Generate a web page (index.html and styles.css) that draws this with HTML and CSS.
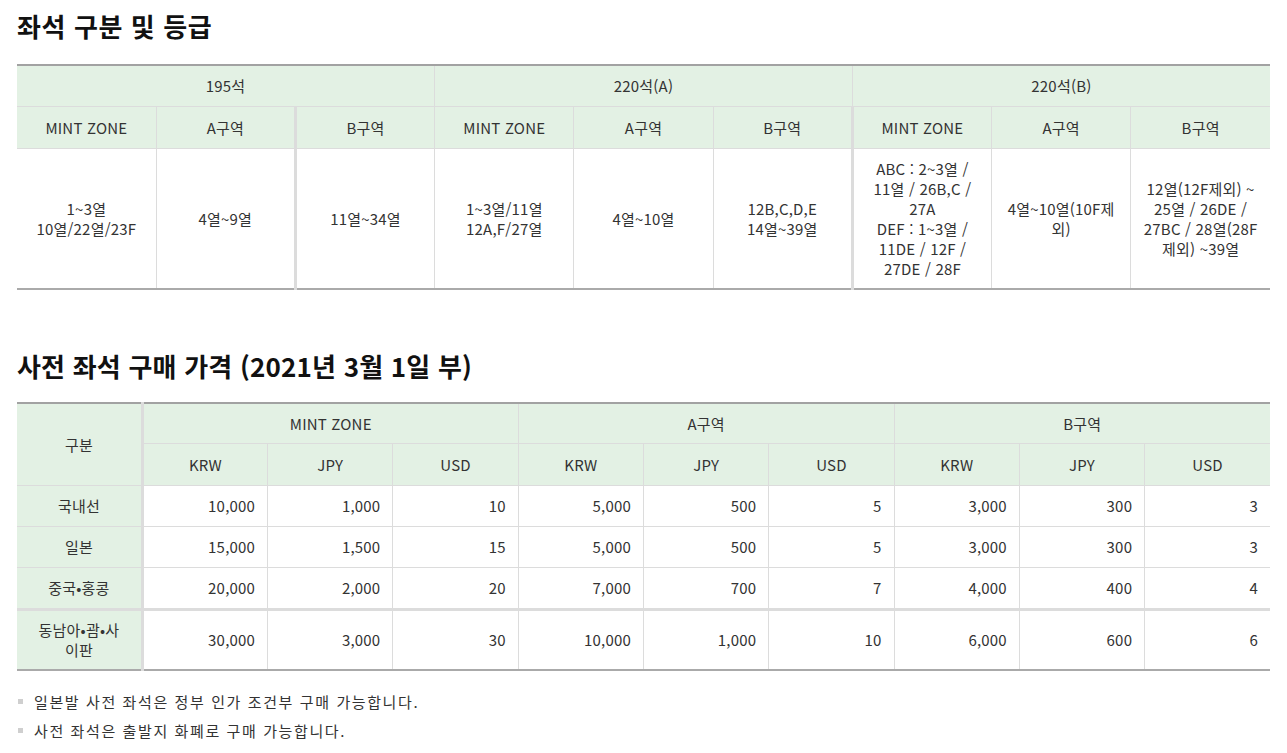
FILE: index.html
```html
<!DOCTYPE html>
<html lang="ko">
<head>
<meta charset="utf-8">
<title>좌석 구분 및 등급</title>
<link rel="stylesheet" href="styles.css">
</head>
<body>
<div class="page">
  <h2 class="title t1">좌석 구분 및 등급</h2>
  <table class="tbl seat">
    <colgroup>
      <col><col><col><col><col><col><col><col><col>
    </colgroup>
    <thead>
      <tr class="h1">
        <th colspan="3" class="first">195석</th>
        <th colspan="3">220석(A)</th>
        <th colspan="3" class="last">220석(B)</th>
      </tr>
      <tr class="h2">
        <th class="first">MINT ZONE</th>
        <th>A구역</th>
        <th class="thick">B구역</th>
        <th>MINT ZONE</th>
        <th>A구역</th>
        <th>B구역</th>
        <th class="thick">MINT ZONE</th>
        <th>A구역</th>
        <th class="last">B구역</th>
      </tr>
    </thead>
    <tbody>
      <tr class="body">
        <td class="first">1~3열<br>10열/22열/23F</td>
        <td>4열~9열</td>
        <td class="thick">11열~34열</td>
        <td>1~3열/11열<br>12A,F/27열</td>
        <td>4열~10열</td>
        <td>12B,C,D,E<br>14열~39열</td>
        <td class="thick nw">ABC : 2~3열 /<br>11열 / 26B,C /<br>27A<br>DEF : 1~3열 /<br>11DE / 12F /<br>27DE / 28F</td>
        <td class="nw">4열~10열(10F제<br>외)</td>
        <td class="last nw">12열(12F제외) ~<br>25열 / 26DE /<br>27BC / 28열(28F<br>제외) ~39열</td>
      </tr>
    </tbody>
  </table>

  <h2 class="title t2">사전 좌석 구매 가격 (2021년 3월 1일 부)</h2>
  <table class="tbl price">
    <colgroup>
      <col><col><col><col><col><col><col><col><col><col>
    </colgroup>
    <thead>
      <tr class="h1">
        <th rowspan="2" class="first">구분</th>
        <th colspan="3" class="thick">MINT ZONE</th>
        <th colspan="3">A구역</th>
        <th colspan="3" class="last">B구역</th>
      </tr>
      <tr class="h2">
        <th class="thick">KRW</th><th>JPY</th><th>USD</th>
        <th>KRW</th><th>JPY</th><th>USD</th>
        <th>KRW</th><th>JPY</th><th class="last">USD</th>
      </tr>
    </thead>
    <tbody>
      <tr>
        <th class="first rowh">국내선</th>
        <td class="thick">10,000</td><td>1,000</td><td>10</td>
        <td>5,000</td><td>500</td><td>5</td>
        <td>3,000</td><td>300</td><td class="last">3</td>
      </tr>
      <tr>
        <th class="first rowh">일본</th>
        <td class="thick">15,000</td><td>1,500</td><td>15</td>
        <td>5,000</td><td>500</td><td>5</td>
        <td>3,000</td><td>300</td><td class="last">3</td>
      </tr>
      <tr>
        <th class="first rowh">중국•홍콩</th>
        <td class="thick">20,000</td><td>2,000</td><td>20</td>
        <td>7,000</td><td>700</td><td>7</td>
        <td>4,000</td><td>400</td><td class="last">4</td>
      </tr>
      <tr class="tall">
        <th class="first rowh">동남아•괌•사<br>이판</th>
        <td class="thick">30,000</td><td>3,000</td><td>30</td>
        <td>10,000</td><td>1,000</td><td>10</td>
        <td>6,000</td><td>600</td><td class="last">6</td>
      </tr>
    </tbody>
  </table>

  <ul class="notes">
    <li>일본발 사전 좌석은 정부 인가 조건부 구매 가능합니다.</li>
    <li>사전 좌석은 출발지 화폐로 구매 가능합니다.</li>
  </ul>
</div>
</body>
</html>
```

FILE: styles.css
```css
html, body {
  margin: 0;
  padding: 0;
  background: #fff;
}

body {
  font-family: "Noto Sans CJK KR", "Noto Sans", sans-serif;
  color: #333;
  font-size: 15px;
}

.page {
  padding: 0 17px;
}

.title {
  margin: 0;
  font-size: 26px;
  line-height: 32px;
  font-weight: 700;
  color: #111;
  letter-spacing: 0.2px;
}

.t1 {
  padding-top: 10px;
  margin-bottom: 22px;
  letter-spacing: 0.6px;
}

.t2 {
  margin-top: 60px;
  margin-bottom: 20px;
}

.tbl {
  width: 100%;
  border-collapse: collapse;
  table-layout: fixed;
  border-top: 2px solid #a2a2a2;
  border-bottom: 2px solid #aaaaaa;
}

.tbl th,
.tbl td {
  border: 1px solid #dcdcdc;
  padding: 0 8px;
  font-weight: 400;
  font-size: 15px;
  line-height: 20px;
  color: #333;
  text-align: center;
  vertical-align: middle;
  letter-spacing: 0.2px;
}

.tbl thead th {
  background: #e3f1e4;
}

.tbl .first {
  border-left: none;
}

.tbl .last {
  border-right: none;
}

.tbl .thick {
  border-left: 3px solid #dcdcdc;
}

.tbl tr.h1 th {
  height: 40px;
}

.tbl tr.h2 th {
  height: 41px;
}

.price tr.h1 th {
  height: 39px;
}

.seat tr.body td {
  height: 139px;
}

.nw {
  white-space: nowrap;
}

.price tbody td {
  text-align: right;
  padding-right: 12px;
  height: 40px;
}

.price tbody th.rowh {
  background: #e3f1e4;
  height: 40px;
}

.price tr.tall td,
.price tr.tall th {
  border-top: 3px solid #dcdcdc;
  height: 58px;
}

.price tr.tall th.rowh {
  height: 58px;
}

.notes {
  list-style: none;
  margin: 16px 0 0;
  padding: 0;
}

.notes li {
  position: relative;
  padding-left: 17px;
  font-size: 15px;
  line-height: 29px;
  color: #333;
  letter-spacing: 1.6px;
}

.notes li::before {
  content: "";
  position: absolute;
  left: 1px;
  top: 12px;
  width: 5px;
  height: 5px;
  background: #cfcfcf;
}
```
